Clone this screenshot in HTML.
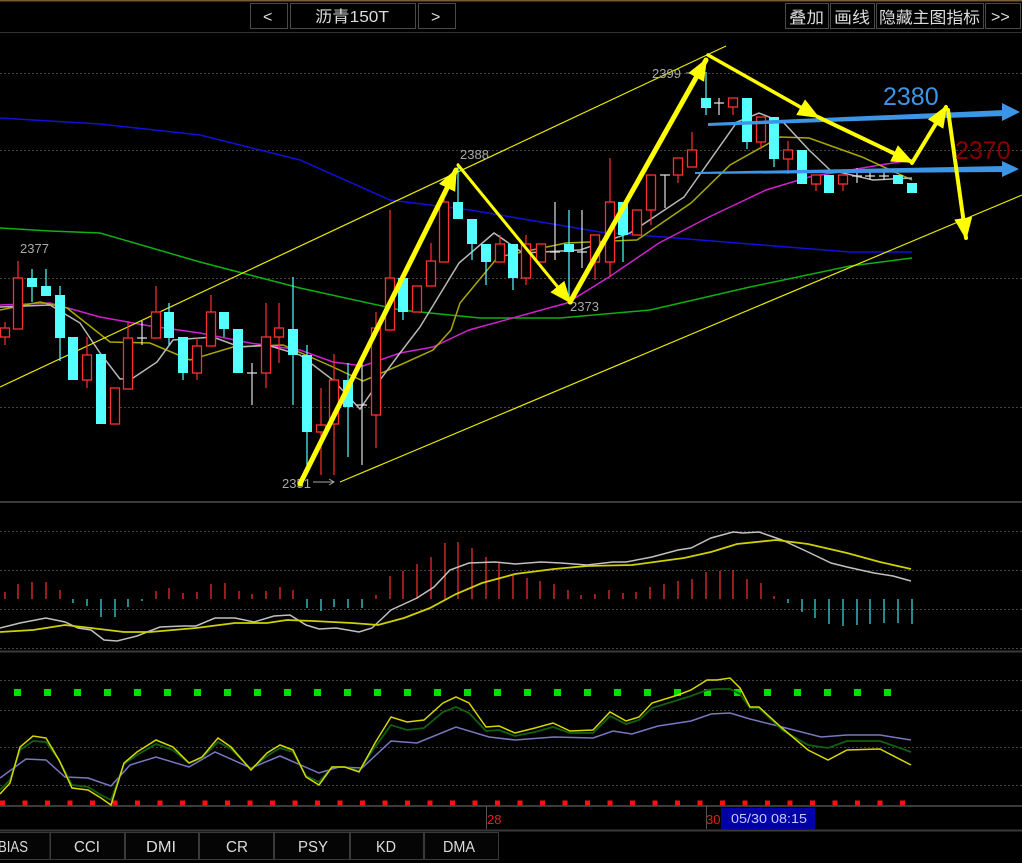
<!DOCTYPE html>
<html><head><meta charset="utf-8"><style>
html,body{margin:0;padding:0;background:#000;width:1022px;height:863px;overflow:hidden}
svg{display:block}
.b{fill:#000;stroke:#4a4a4a;stroke-width:1}
.t{font-family:"Liberation Sans","Noto Sans CJK SC",sans-serif;fill:#dcdcdc;font-size:16px}
.p{font-family:"Liberation Sans",sans-serif;fill:#a8a8a8;font-size:13px}
</style></head><body>
<svg width="1022" height="863" viewBox="0 0 1022 863" xmlns="http://www.w3.org/2000/svg">
<defs>
<marker id="ya" markerUnits="userSpaceOnUse" markerWidth="24" markerHeight="20" refX="20" refY="10" orient="auto"><path d="M0 1L22 10L0 19Z" fill="#ffff00"/></marker>
</defs>
<rect x="0" y="0" width="1022" height="1.5" fill="#7a5a30"/>
<!-- top bar -->
<rect class="b" x="250.5" y="3.5" width="37" height="25"/><text class="t" x="263" y="22">&lt;</text>
<rect class="b" x="290.5" y="3.5" width="125" height="25"/><text class="t" x="315" y="22" textLength="74" lengthAdjust="spacingAndGlyphs">沥青150T</text>
<rect class="b" x="418.5" y="3.5" width="37" height="25"/><text class="t" x="431" y="22">&gt;</text>
<rect class="b" x="785.5" y="3.5" width="43" height="25"/><text class="t" x="789" y="23" textLength="35" lengthAdjust="spacingAndGlyphs">叠加</text>
<rect class="b" x="830.5" y="3.5" width="44" height="25"/><text class="t" x="834" y="23" textLength="36" lengthAdjust="spacingAndGlyphs">画线</text>
<rect class="b" x="876.5" y="3.5" width="107" height="25"/><text class="t" x="879" y="23" textLength="101" lengthAdjust="spacingAndGlyphs">隐藏主图指标</text>
<rect class="b" x="985.5" y="3.5" width="35" height="25"/><text class="t" x="991" y="22">&gt;&gt;</text>
<line x1="0" y1="32.5" x2="1022" y2="32.5" stroke="#333"/>
<!-- grids -->
<g stroke="#444" stroke-dasharray="2,2" stroke-width="1">
<path d="M0 73.5H1022M0 150.5H1022M0 278.5H1022M0 407.5H1022"/>
<path d="M0 531.5H1022M0 570.5H1022M0 609.5H1022M0 648.5H1022"/>
<path d="M0 680.5H1022M0 710.5H1022M0 747.5H1022M0 785.5H1022"/>
</g>
<path d="M0 502H1022M0 651.5H1022M0 806H1022M0 830.5H1022" stroke="#3a3a3a" stroke-width="2"/>
<!-- MAs -->
<polyline fill="none" stroke="#1010d8" stroke-width="1.5" points="0,118 100,124 200,135 300,160 390,200 470,210 600,232 750,244 850,252 912,252"/>
<polyline fill="none" stroke="#10b010" stroke-width="1.5" points="0,228 50,231 100,233 200,262 300,288 400,310 480,318 560,318 650,310 750,287 850,266 912,258"/>
<polyline fill="none" stroke="#d020d0" stroke-width="1.5" points="0,305 50,303 100,317 150,326 200,333 250,343 300,350 333,362 363,366 400,353 433,347 469,330 567,303 609,277 659,243 709,217 766,190 809,177 880,165 912,160"/>
<polyline fill="none" stroke="#a8a800" stroke-width="1.5" points="0,310 40,302 67,308 110,342 150,343 190,360 233,347 283,345 333,367 363,381 400,365 433,350 451,330 460,303 498,257 566,243 637,240 691,203 730,165 780,137 809,138 862,157 912,180"/>
<polyline fill="none" stroke="#b8b8b8" stroke-width="1.5" points="0,307 50,305 80,323 100,353 120,379 133,378 157,362 173,340 213,337 240,347 267,345 300,355 333,380 360,409 380,380 400,353 420,327 459,263 494,233 523,253 580,250 630,233 684,197 737,122 759,113 784,123 809,150 830,170 873,180 912,178"/>
<!-- channel lines -->
<line x1="0" y1="387" x2="726" y2="46" stroke="#e8e800" stroke-width="1.2"/>
<line x1="340" y1="482" x2="1022" y2="195" stroke="#e8e800" stroke-width="1.2"/>
<!-- candles -->
<path fill="none" stroke="#ff3030" stroke-width="1.2" d="M5 322V345M18 261V329M87 337V388M128 321V389M156 286V338M197 338V380M211 295V346M266 303V388M279 303V363M321 388V475M334 354V475M376 312V448M390 210V330M431 243V286M444 198V262M500 235V262M526 235V285M595 235V280M610 158V277M651 175V225M678 158V183M692 132V167M733 98V115M761 117V149M788 141V174M816 175V191M843 175V191"/>
<path fill="none" stroke="#54ffff" stroke-width="1.2" d="M32 269V302M46 269V296M60 286V361M169 303V345M183 337V380M224 312V337M293 277V405M307 345V470M348 363V457M403 278V320M458 163V219M472 219V260M486 244V285M513 244V290M569 210V300M623 202V262M706 72V115M747 98V149M774 117V167"/>
<path fill="none" stroke="#e0e0e0" stroke-width="1.2" d="M142 321V345M137 338H147M252 363V405M247 373H257M362 363V465M357 405H367M555 202V260M550 252H560M582 210V268M577 252H587M665 175V208M660 175H670M719 98V115M714 103H724M857 168V183M852 176H862M870 170V180M865 176H875M884 170V180M879 176H889"/>
<g fill="#000" stroke="#ff3030" stroke-width="1.3">
<rect x="0.5" y="328" width="9" height="9"/><rect x="13.5" y="278" width="9" height="51"/><rect x="82.5" y="355" width="9" height="25"/><rect x="110.5" y="388" width="9" height="36"/><rect x="123.5" y="338" width="9" height="51"/><rect x="151.5" y="312" width="9" height="26"/><rect x="192.5" y="346" width="9" height="27"/><rect x="206.5" y="312" width="9" height="34"/><rect x="261.5" y="337" width="9" height="36"/><rect x="274.5" y="328" width="9" height="9"/><rect x="316.5" y="425" width="9" height="7"/><rect x="329.5" y="380" width="9" height="44"/><rect x="371.5" y="328" width="9" height="87"/><rect x="385.5" y="278" width="9" height="52"/><rect x="412.5" y="286" width="9" height="26"/><rect x="426.5" y="261" width="9" height="25"/><rect x="439.5" y="202" width="9" height="60"/><rect x="495.5" y="244" width="9" height="18"/><rect x="521.5" y="244" width="9" height="34"/><rect x="536.5" y="244" width="9" height="18"/><rect x="590.5" y="235" width="9" height="27"/><rect x="605.5" y="202" width="9" height="60"/><rect x="632.5" y="210" width="9" height="25"/><rect x="646.5" y="175" width="9" height="35"/><rect x="673.5" y="158" width="9" height="17"/><rect x="687.5" y="150" width="9" height="17"/><rect x="728.5" y="98" width="9" height="9"/><rect x="756.5" y="117" width="9" height="25"/><rect x="783.5" y="150" width="9" height="9"/><rect x="811.5" y="175" width="9" height="9"/><rect x="838.5" y="175" width="9" height="9"/>
</g>
<g fill="#54ffff">
<rect x="27" y="278" width="10" height="9"/><rect x="41" y="286" width="10" height="10"/><rect x="55" y="295" width="10" height="43"/><rect x="68" y="337" width="10" height="43"/><rect x="96" y="354" width="10" height="70"/><rect x="164" y="312" width="10" height="26"/><rect x="178" y="337" width="10" height="36"/><rect x="219" y="312" width="10" height="17"/><rect x="233" y="329" width="10" height="44"/><rect x="288" y="329" width="10" height="26"/><rect x="302" y="355" width="10" height="77"/><rect x="343" y="380" width="10" height="27"/><rect x="398" y="278" width="10" height="34"/><rect x="453" y="202" width="10" height="17"/><rect x="467" y="219" width="10" height="25"/><rect x="481" y="244" width="10" height="18"/><rect x="508" y="244" width="10" height="34"/><rect x="564" y="244" width="10" height="8"/><rect x="618" y="202" width="10" height="33"/><rect x="701" y="98" width="10" height="10"/><rect x="742" y="98" width="10" height="44"/><rect x="769" y="117" width="10" height="42"/><rect x="797" y="150" width="10" height="34"/><rect x="824" y="175" width="10" height="18"/><rect x="893" y="175" width="10" height="9"/><rect x="907" y="183" width="10" height="10"/>
</g>
<!-- price labels -->
<text class="p" x="20" y="253">2377</text>
<text class="p" x="460" y="159">2388</text>
<text class="p" x="652" y="78">2399</text>
<text class="p" x="570" y="311">2373</text>
<text class="p" x="282" y="488">2351</text>
<path d="M313 482H333M329 479L334 482L329 485" stroke="#a8a8a8" fill="none"/>
<path d="M686 73H700" stroke="#a8a8a8"/>
<!-- blue arrows -->
<path d="M708 123L1005 110L1005 116L708 126Z" fill="#3d95e6"/>
<path d="M1002 103L1020 112L1002 121Z" fill="#3d95e6"/>
<path d="M695 172L1005 166L1005 172L695 174Z" fill="#3d95e6"/>
<path d="M1002 161L1019 169L1002 177Z" fill="#3d95e6"/>
<!-- yellow arrows -->
<g stroke="#ffff00" fill="none" stroke-linecap="round">
<line x1="300" y1="484" x2="456" y2="170" stroke-width="5" marker-end="url(#ya)"/>
<line x1="458" y1="165" x2="570" y2="302" stroke-width="3" marker-end="url(#ya)"/>
<line x1="570" y1="302" x2="706" y2="60" stroke-width="5" marker-end="url(#ya)"/>
<line x1="708" y1="55" x2="818" y2="117" stroke-width="3.5" marker-end="url(#ya)"/>
<line x1="818" y1="117" x2="912" y2="162" stroke-width="4" marker-end="url(#ya)"/>
<line x1="912" y1="163" x2="946" y2="107" stroke-width="4" marker-end="url(#ya)"/>
<line x1="948" y1="110" x2="966" y2="238" stroke-width="4" marker-end="url(#ya)"/>
</g>
<text x="883" y="105" font-family="Liberation Sans,sans-serif" font-size="25" fill="#3d95e6">2380</text>
<text x="955" y="159" font-family="Liberation Sans,sans-serif" font-size="25" fill="#8a0000">2370</text>
<!-- MACD bars -->
<path stroke="#ff3030" stroke-width="1.2" d="M5 599V592M18 599V584M32 599V582M46 599V582M60 599V590M156 599V591M169 599V588M183 599V593M197 599V592M211 599V584M225 599V583M239 599V591M252 599V594M266 599V591M280 599V587M293 599V590M376 599V595M390 599V576M403 599V571M417 599V564M431 599V557M445 599V543M458 599V542M472 599V548M486 599V557M499 599V563M513 599V575M527 599V578M540 599V581M554 599V584M568 599V590M581 599V595M595 599V594M609 599V590M623 599V593M636 599V592M650 599V587M664 599V584M678 599V581M692 599V579M706 599V572M720 599V571M733 599V570M747 599V579M761 599V583M774 599V596"/>
<path stroke="#40e0e8" stroke-width="1.2" d="M73 599V603M87 599V606M101 599V617M115 599V617M128 599V607M142 599V601M307 599V608M321 599V611M334 599V607M348 599V608M362 599V608M788 599V603M802 599V612M815 599V618M829 599V624M843 599V626M857 599V625M870 599V624M884 599V623M898 599V623M912 599V624"/>
<polyline fill="none" stroke="#c0c0c0" stroke-width="1.5" points="0,628 20,623 46,618 65,622 78,628 91,630 104,640 117,641 137,636 160,627 183,626 196,626 215,618 235,618 254,622 274,616 290,615 306,625 319,629 336,628 359,632 372,628 391,610 417,598 434,587 450,570 469,563 495,562 515,564 541,562 561,563 587,565 613,562 626,562 652,557 678,550 691,548 711,538 733,532 743,533 759,532 782,540 808,552 831,563 847,567 874,573 893,576 911,581"/>
<polyline fill="none" stroke="#d0d000" stroke-width="1.8" points="0,632 33,630 65,625 91,628 124,632 150,632 196,628 235,623 267,623 287,620 313,621 352,623 378,625 404,618 430,608 456,594 482,583 515,574 554,569 587,566 632,565 684,558 711,552 737,544 776,540 808,544 847,553 880,562 911,569"/>
<!-- KDJ -->
<g fill="#00e000">
<rect x="14" y="689" width="7" height="7"/><rect x="44" y="689" width="7" height="7"/><rect x="74" y="689" width="7" height="7"/><rect x="104" y="689" width="7" height="7"/><rect x="134" y="689" width="7" height="7"/><rect x="164" y="689" width="7" height="7"/><rect x="194" y="689" width="7" height="7"/><rect x="224" y="689" width="7" height="7"/><rect x="254" y="689" width="7" height="7"/><rect x="284" y="689" width="7" height="7"/><rect x="314" y="689" width="7" height="7"/><rect x="344" y="689" width="7" height="7"/><rect x="374" y="689" width="7" height="7"/><rect x="404" y="689" width="7" height="7"/><rect x="434" y="689" width="7" height="7"/><rect x="464" y="689" width="7" height="7"/><rect x="494" y="689" width="7" height="7"/><rect x="524" y="689" width="7" height="7"/><rect x="554" y="689" width="7" height="7"/><rect x="584" y="689" width="7" height="7"/><rect x="614" y="689" width="7" height="7"/><rect x="644" y="689" width="7" height="7"/><rect x="674" y="689" width="7" height="7"/><rect x="704" y="689" width="7" height="7"/><rect x="734" y="689" width="7" height="7"/><rect x="764" y="689" width="7" height="7"/><rect x="794" y="689" width="7" height="7"/><rect x="824" y="689" width="7" height="7"/><rect x="854" y="689" width="7" height="7"/><rect x="884" y="689" width="7" height="7"/>
</g>
<path stroke="#ff1010" stroke-width="5" stroke-dasharray="5,17.5" d="M0 803H906"/>
<polyline fill="none" stroke="#7878c0" stroke-width="1.5" points="0,778 26,759 46,760 65,777 88,778 111,786 130,765 156,757 189,767 215,752 251,768 280,756 319,773 339,767 362,768 391,741 417,743 456,727 489,737 515,740 554,737 593,738 613,731 632,734 658,726 691,721 711,714 730,713 750,719 782,727 821,737 847,735 880,735 911,740"/>
<polyline fill="none" stroke="#106010" stroke-width="1.8" points="0,790 10,780 20,750 33,741 46,742 59,760 72,785 88,787 101,795 111,800 124,764 137,755 156,744 173,750 189,763 202,758 218,742 231,749 251,769 267,756 280,748 293,752 306,776 319,782 332,767 345,767 359,771 375,747 391,725 407,730 424,728 443,712 456,707 469,713 486,731 499,730 515,736 535,732 553,727 570,733 593,733 610,716 626,724 639,720 652,708 678,700 691,696 707,690 717,689 730,689 740,694 750,708 759,708 782,730 808,745 828,748 847,741 880,741 911,752"/>
<polyline fill="none" stroke="#d8d800" stroke-width="1.5" points="0,794 10,783 20,747 33,736 46,738 59,760 72,788 88,790 101,798 111,805 124,763 137,752 156,740 173,747 189,763 202,757 218,738 231,747 251,770 267,753 280,745 293,750 306,777 319,785 332,767 345,767 359,772 375,743 391,717 407,722 424,720 443,703 456,697 469,703 486,727 499,726 515,733 535,728 553,723 570,731 593,730 610,712 626,721 639,717 652,703 678,695 691,690 707,680 717,680 730,678 740,688 750,707 759,707 782,728 808,750 828,760 847,750 880,749 911,765"/>
<!-- x axis -->
<path d="M486.5 806V829M706.5 806V829" stroke="#555"/>
<text x="487" y="824" font-family="Liberation Sans,sans-serif" font-size="13" fill="#e02020">28</text>
<text x="706" y="824" font-family="Liberation Sans,sans-serif" font-size="13" fill="#e02020">30</text>
<rect x="721" y="808" width="94" height="21" fill="#0000a8"/>
<text x="731" y="823" font-family="Liberation Sans,sans-serif" font-size="13" fill="#c8c8ff" textLength="76" lengthAdjust="spacingAndGlyphs">05/30 08:15</text>
<!-- tabs -->
<g fill="#050505" stroke="#3a3a3a">
<rect x="-1" y="832.5" width="51" height="27"/><rect x="50.5" y="832.5" width="74" height="27"/><rect x="125.5" y="832.5" width="73" height="27"/><rect x="199.5" y="832.5" width="74" height="27"/><rect x="274.5" y="832.5" width="75" height="27"/><rect x="350.5" y="832.5" width="73" height="27"/><rect x="424.5" y="832.5" width="74" height="27"/>
</g>
<text class="t" x="-2" y="852" textLength="30" lengthAdjust="spacingAndGlyphs">BIAS</text>
<text class="t" x="74" y="852" textLength="26" lengthAdjust="spacingAndGlyphs">CCI</text>
<text class="t" x="146" y="852" textLength="30" lengthAdjust="spacingAndGlyphs">DMI</text>
<text class="t" x="226" y="852" textLength="22" lengthAdjust="spacingAndGlyphs">CR</text>
<text class="t" x="298" y="852" textLength="30" lengthAdjust="spacingAndGlyphs">PSY</text>
<text class="t" x="376" y="852" textLength="20" lengthAdjust="spacingAndGlyphs">KD</text>
<text class="t" x="443" y="852" textLength="32" lengthAdjust="spacingAndGlyphs">DMA</text>
</svg>
</body></html>
